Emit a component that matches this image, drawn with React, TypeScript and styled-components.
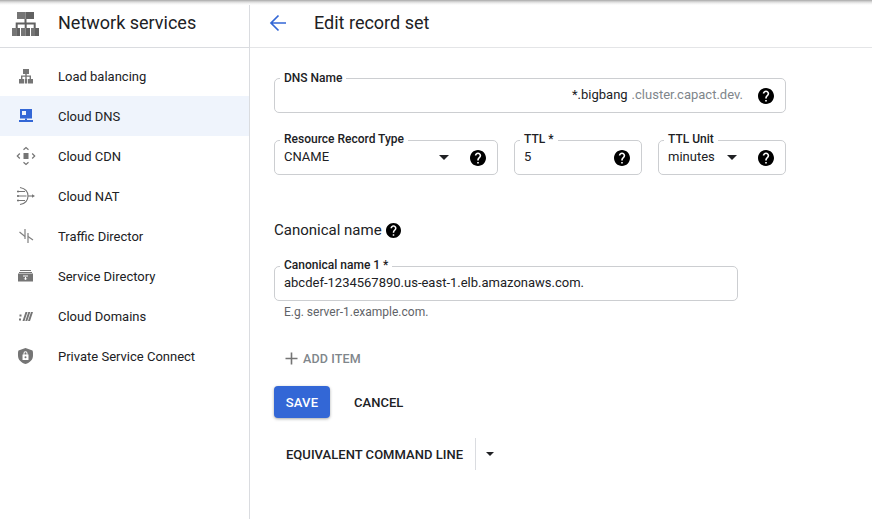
import React from "react";
import styled, { createGlobalStyle } from "styled-components";

const Global = createGlobalStyle`
  html, body { margin: 0; padding: 0; background: #fff; }
  body { font-family: Roboto, "Liberation Sans", sans-serif; color: #202124; }
  * { box-sizing: border-box; }
`;

const Page = styled.div`
  position: relative;
  display: flex;
  width: 872px;
  height: 519px;
  overflow: hidden;
  background: #fff;
  &::before {
    content: "";
    position: absolute;
    left: 0;
    right: 0;
    top: 0;
    height: 5px;
    background: linear-gradient(#a8a8a8, #cfcfcf 30%, #ececec 60%, #fff);
  }
`;

const Sidebar = styled.aside`
  width: 250px;
  flex: none;
  border-right: 1px solid #dadce0;
`;

const SideHeader = styled.div`
  display: flex;
  align-items: center;
  height: 48px;
  padding-left: 12px;
  border-bottom: 1px solid #dadce0;
`;

const SideTitle = styled.div`
  margin: 0 0 2px 19px;
  font-size: 18px;
  line-height: 24px;
  color: #202124;
`;

const Nav = styled.nav`
  padding-top: 8px;
`;

const NavItem = styled.div<{ $active?: boolean }>`
  display: flex;
  align-items: center;
  height: 40px;
  padding-left: 16px;
  background: ${(p) => (p.$active ? "#eff4fc" : "transparent")};
`;

const NavIcon = styled.svg`
  width: 20px;
  height: 20px;
  flex: none;
  margin-right: 22px;
`;

const NavLabel = styled.span`
  padding-top: 2px;
  font-size: 13px;
  line-height: 20px;
  color: #202124;
`;

const Main = styled.main`
  flex: 1;
  min-width: 0;
`;

const TopBar = styled.div`
  display: flex;
  align-items: center;
  height: 48px;
  padding: 0 0 1px 18px;
  border-bottom: 1px solid #e4e5e7;
`;

const BackIcon = styled.svg`
  width: 20px;
  height: 20px;
  flex: none;
  margin-right: 26px;
`;

const PageTitle = styled.h1`
  margin: 0 0 1px;
  font-size: 18px;
  font-weight: 400;
  line-height: 24px;
  color: #202124;
`;

const Form = styled.div`
  display: flex;
  flex-direction: column;
  align-items: flex-start;
  padding: 30px 0 0 24px;
`;

const FieldRow = styled.div`
  display: flex;
  gap: 16px;
  margin-top: 27px;
`;

const Field = styled.div<{ $w: number }>`
  position: relative;
  display: flex;
  align-items: center;
  width: ${(p) => p.$w}px;
  height: 35px;
  padding: 0 11px 0 9px;
  border: 1px solid #ccced1;
  border-radius: 5px;
`;

const FieldLabel = styled.label<{ $top?: number }>`
  position: absolute;
  left: 5px;
  top: ${(p) => p.$top ?? -10}px;
  padding: 0 4px;
  background: #fff;
  font-size: 12px;
  font-weight: 500;
  line-height: 16px;
  color: #202124;
  white-space: nowrap;
`;

const Value = styled.span`
  padding-bottom: 2px;
  font-size: 13px;
  line-height: 20px;
  color: #202124;
  white-space: nowrap;
`;

const DnsValue = styled.div`
  display: flex;
  flex: 1;
  justify-content: flex-end;
  gap: 4px;
  margin-right: 15px;
  white-space: nowrap;
`;

const Suffix = styled.span`
  padding-bottom: 2px;
  font-size: 13px;
  line-height: 20px;
  color: #80868b;
`;

const Grow = styled.div`
  flex: 1;
`;

const Caret = styled.span<{ $mr?: number; $size?: number }>`
  flex: none;
  width: 0;
  height: 0;
  margin-right: ${(p) => p.$mr ?? 0}px;
  border-left: ${(p) => p.$size ?? 5}px solid transparent;
  border-right: ${(p) => p.$size ?? 5}px solid transparent;
  border-top: ${(p) => p.$size ?? 5}px solid #202124;
`;

const HelpIcon = styled.svg<{ $size?: number }>`
  width: ${(p) => p.$size ?? 16}px;
  height: ${(p) => p.$size ?? 16}px;
  flex: none;
`;

const SectionTitle = styled.div`
  display: flex;
  align-items: center;
  gap: 4px;
  margin-top: 45px;
  font-size: 15px;
  line-height: 20px;
  color: #202124;
`;

const CanonicalBlock = styled.div`
  margin-top: 26px;
`;

const Hint = styled.div`
  margin: 3px 0 0 10px;
  font-size: 12px;
  line-height: 16px;
  color: #5f6368;
`;

const AddButton = styled.div`
  display: flex;
  align-items: center;
  gap: 4px;
  height: 20px;
  margin: 28px 0 0 10px;
  font-size: 12.5px;
  font-weight: 500;
  letter-spacing: 0.15px;
  color: #80868b;
`;

const Actions = styled.div`
  display: flex;
  align-items: center;
  gap: 24px;
  margin-top: 18px;
`;

const SaveButton = styled.button`
  width: 56px;
  height: 32px;
  padding: 0;
  border: 0;
  border-radius: 4px;
  background: #3367d6;
  box-shadow: 0 1px 3px rgba(60, 64, 67, 0.45);
  color: #fff;
  font: 500 13px Roboto, sans-serif;
  letter-spacing: 0.2px;
`;

const TextButton = styled.button`
  padding: 0;
  border: 0;
  background: none;
  color: #202124;
  font: 500 13px Roboto, sans-serif;
  letter-spacing: 0.03px;
  white-space: nowrap;
`;

const CommandRow = styled.div`
  display: flex;
  align-items: center;
  height: 32px;
  margin: 20px 0 0 12px;
`;

const Divider = styled.span`
  width: 1px;
  height: 32px;
  margin: 0 10px 0 12px;
  background: #dadce0;
`;

const Help = ({ size }: { size?: number }) => (
  <HelpIcon $size={size} viewBox="2 2 20 20">
    <path
      fill="#000"
      d="M12 2C6.48 2 2 6.48 2 12s4.48 10 10 10 10-4.48 10-10S17.52 2 12 2zm1 17h-2v-2h2v2zm2.07-7.75-.9.92C13.45 12.9 13 13.5 13 15h-2v-.5c0-1.1.45-2.1 1.17-2.83l1.24-1.26c.37-.36.59-.86.59-1.41 0-1.1-.9-2-2-2s-2 .9-2 2H8c0-2.21 1.79-4 4-4s4 1.79 4 4c0 .88-.36 1.68-.93 2.25z"
    />
  </HelpIcon>
);

const G = "#757575";

const icons: Record<string, React.ReactNode> = {
  lb: (
    <g fill={G}>
      <rect x="7" y="3" width="6" height="5" />
      <rect x="9.300" y="8" width="1.400" height="5" />
      <path d="M5 9.500h10V13h-1.400v-2.200H6.400V13H5z" />
      <rect x="3" y="13" width="5" height="4.500" />
      <rect x="8.800" y="13" width="2.400" height="4.500" />
      <rect x="12" y="13" width="5" height="4.500" />
    </g>
  ),
  dns: (
    <g fill="#3367d6">
      <path fillRule="evenodd" d="M4 3h12v9.500H4zM6 5v4h4V5z" />
      <rect x="9" y="12.500" width="2" height="1.500" />
      <rect x="3" y="14" width="14" height="2" />
    </g>
  ),
  cdn: (
    <g fill="none" stroke={G} strokeWidth="1.2">
      <rect x="7.500" y="7" width="5" height="6" fill={G} stroke="none" />
      <path d="M7.500 3.800 10 1.500l2.500 2.300M7.500 16.200l2.500 2.300 2.500-2.300M3.800 7.500 1.300 10l2.500 2.500M16.200 7.500l2.500 2.500-2.500 2.500" />
    </g>
  ),
  nat: (
    <g fill="none" stroke={G} strokeWidth="1.100">
      <path d="M4 1.500c5.500 1 8 4 8 8.500s-2.500 7.500-8 8.500" />
      <path d="M1 5.500h8M1 10h9.500M1 14.500h8" />
      <path d="M12 10h5" />
      <path fill={G} stroke="none" d="M16 8.300l3 1.700-3 1.700z" />
      <circle cx="2" cy="5.500" r="1" fill={G} stroke="none" />
      <circle cx="2" cy="10" r="1" fill={G} stroke="none" />
      <circle cx="2" cy="14.500" r="1" fill={G} stroke="none" />
    </g>
  ),
  td: (
    <g fill="none" stroke="#808080" strokeWidth="1.200">
      <path d="M9 3v10M12 7v10" />
      <path d="M3.500 6 9 10.500M12 10.500l5 3.500" />
    </g>
  ),
  sd: (
    <g fill={G}>
      <rect x="4" y="4" width="11" height="1" />
      <rect x="3" y="6" width="13" height="1" />
      <path
        fillRule="evenodd"
        d="M2 7.500h15v8H2zM7 9.500v1h5v-1zM9 11v1.500H7.500L9.500 14l2-1.500H10V11z"
      />
    </g>
  ),
  cd: (
    <g fill={G}>
      <rect x="3.500" y="8.500" width="2" height="2" />
      <rect x="3" y="12.500" width="2" height="2" />
      <path d="M9.500 6h2l-3 9h-2zM12.300 6h2l-3 9h-2zM15 6h2l-3 9h-2z" />
    </g>
  ),
  psc: (
    <path
      fill={G}
      fillRule="evenodd"
      d="M9.500 2 16.500 4.500c.6 1 .5 3.500.5 5 0 4.300-3 7.200-7.500 8.500C5 16.700 2 13.800 2 9.500c0-1.500-.1-4 .5-5zM7.500 8.500V7.300a2 2 0 0 1 4 0v1.200h1v5.500h-6V8.500zm1 0h2V7.300a1 1 0 0 0-2 0zM9.500 10.200a1 1 0 1 0 0 2 1 1 0 0 0 0-2z"
    />
  ),
};

const items: { key: string; label: string; active?: boolean }[] = [
  { key: "lb", label: "Load balancing" },
  { key: "dns", label: "Cloud DNS", active: true },
  { key: "cdn", label: "Cloud CDN" },
  { key: "nat", label: "Cloud NAT" },
  { key: "td", label: "Traffic Director" },
  { key: "sd", label: "Service Directory" },
  { key: "cd", label: "Cloud Domains" },
  { key: "psc", label: "Private Service Connect" },
];

const LogoIcon = styled.svg`
  width: 27px;
  height: 24px;
  flex: none;
`;

export default function App() {
  return (
    <Page>
      <Global />
      <Sidebar>
        <SideHeader>
          <LogoIcon viewBox="0 0 27 24">
            <path fill="#757575" d="M5 0h8.500v7H5z" />
            <path fill="#616161" d="M13.500 0H22v7h-8.500z" />
            <path fill="#616161" d="M12.500 7h2v3.500h9.200V16h-2v-3.500h-7V16h-2v-3.500h-7V16h-2v-5.500h8.800z" />
            <path fill="#757575" d="M0 16h4.200v8H0zM9 16h4.500v8H9zM19 16h4v8h-4z" />
            <path fill="#616161" d="M4.200 16H8v8H4.200zM13.500 16H18v8h-4.500zM23 16h4v8h-4z" />
          </LogoIcon>
          <SideTitle>Network services</SideTitle>
        </SideHeader>
        <Nav>
          {items.map((it) => (
            <NavItem key={it.key} $active={it.active}>
              <NavIcon viewBox="0 0 20 20">{icons[it.key]}</NavIcon>
              <NavLabel>{it.label}</NavLabel>
            </NavItem>
          ))}
        </Nav>
      </Sidebar>
      <Main>
        <TopBar>
          <BackIcon viewBox="0 0 20 20">
            <path
              fill="none"
              stroke="#3367d6"
              strokeWidth="1.700"
              d="M18 10H3.500M10.500 2.500 3 10l7.500 7.500"
            />
          </BackIcon>
          <PageTitle>Edit record set</PageTitle>
        </TopBar>
        <Form>
          <Field $w={512}>
            <FieldLabel $top={-9}>DNS Name</FieldLabel>
            <DnsValue>
              <Value>*.bigbang</Value>
              <Suffix>.cluster.capact.dev.</Suffix>
            </DnsValue>
            <Help />
          </Field>
          <FieldRow>
            <Field $w={224}>
              <FieldLabel>Resource Record Type</FieldLabel>
              <Value>CNAME</Value>
              <Grow />
              <Caret $mr={21} />
              <Help />
            </Field>
            <Field $w={128}>
              <FieldLabel>TTL *</FieldLabel>
              <Value>5</Value>
              <Grow />
              <Help />
            </Field>
            <Field $w={128}>
              <FieldLabel>TTL Unit</FieldLabel>
              <Value>minutes</Value>
              <Grow />
              <Caret $mr={21} />
              <Help />
            </Field>
          </FieldRow>
          <SectionTitle>
            Canonical name
            <Help size={15} />
          </SectionTitle>
          <CanonicalBlock>
            <Field $w={464}>
              <FieldLabel>Canonical name 1 *</FieldLabel>
              <Value>abcdef-1234567890.us-east-1.elb.amazonaws.com.</Value>
            </Field>
            <Hint>E.g. server-1.example.com.</Hint>
          </CanonicalBlock>
          <AddButton>
            <svg width="15" height="15" viewBox="0 0 15 15">
              <path fill="none" stroke="#757575" strokeWidth="1.600" d="M7.500 1.500v12M1.500 7.500h12" />
            </svg>
            ADD ITEM
          </AddButton>
          <Actions>
            <SaveButton>SAVE</SaveButton>
            <TextButton>CANCEL</TextButton>
          </Actions>
          <CommandRow>
            <TextButton>EQUIVALENT COMMAND LINE</TextButton>
            <Divider />
            <Caret $size={4} />
          </CommandRow>
        </Form>
      </Main>
    </Page>
  );
}
